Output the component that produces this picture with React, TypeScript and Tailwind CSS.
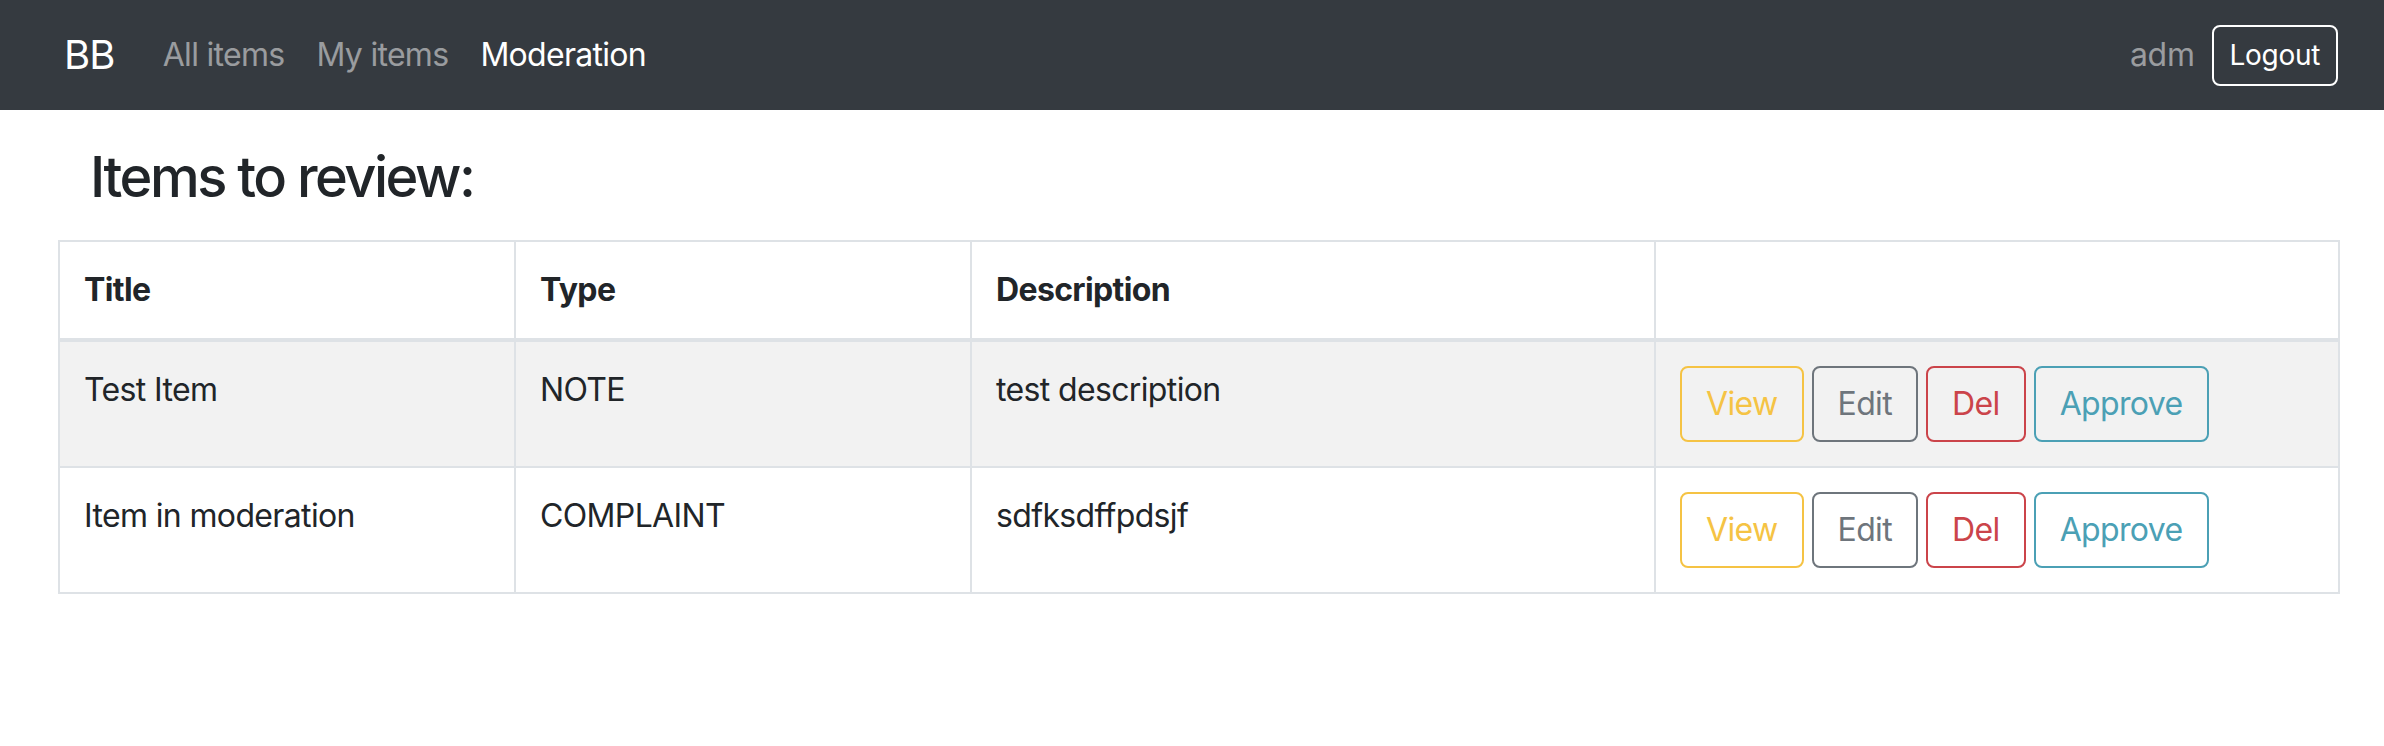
import React from "react";

interface ReviewItem {
  title: string;
  type: string;
  description: string;
}

const items: ReviewItem[] = [
  { title: "Test Item", type: "NOTE", description: "test description" },
  { title: "Item in moderation", type: "COMPLAINT", description: "sdfksdffpdsjf" },
];

const font = { fontFamily: "Inter, 'Noto Sans', sans-serif" };

const Navbar = () => (
  <nav className="h-[110px] bg-[#353a40] flex items-center pl-[64px] pr-[46px]">
    <span className="text-[40px] leading-[60px] text-white mr-[32px] tracking-[-0.02em]">BB</span>
    <a className="px-[16px] text-[32px] leading-[48px] text-white/50 tracking-[-0.022em]">All items</a>
    <a className="px-[16px] text-[32px] leading-[48px] text-white/50 tracking-[-0.022em]">My items</a>
    <a className="px-[16px] text-[32px] leading-[48px] text-white tracking-[-0.022em]">Moderation</a>
    <div className="ml-auto flex items-center tracking-[-0.02em]">
      <span className="text-[32px] leading-[48px] text-white/50 mr-[17px]">adm</span>
      <button className="h-[61px] px-[16px] border-2 border-white rounded-[8px] text-[28px] leading-[42px] text-white">
        Logout
      </button>
    </div>
  </nav>
);

const btnBase = "h-[76px] px-[24px] border-2 rounded-[8px] text-[32px] leading-[48px] bg-transparent";

const Actions = () => (
  <div className="flex gap-[8px]">
    <button className={`${btnBase} border-[#f5c344] text-[#f5c344]`}>View</button>
    <button className={`${btnBase} border-[#6e757c] text-[#6e757c]`}>Edit</button>
    <button className={`${btnBase} border-[#cb444a] text-[#cb444a]`}>Del</button>
    <button className={`${btnBase} border-[#4ba0b5] text-[#4ba0b5]`}>Approve</button>
  </div>
);

export default function App() {
  return (
    <div className="min-h-screen bg-white text-[#212529]" style={font}>
      <Navbar />
      <main className="pl-[58px] pr-[46px]">
        <h3 className="ml-[32px] mt-[34px] mb-[29px] text-[56px] leading-[67px] font-medium tracking-[-0.045em]">
          Items to review:
        </h3>
        <table className="table-fixed w-[2280px] border-collapse border-2 border-[#dee2e6] text-[32px] leading-[48px] tracking-[-0.02em]">
          <colgroup>
            <col className="w-[456px]" />
            <col className="w-[456px]" />
            <col className="w-[684px]" />
            <col className="w-[684px]" />
          </colgroup>
          <thead>
            <tr>
              <th className="p-[24px] text-left font-bold border-2 border-b-4 border-[#dee2e6]">Title</th>
              <th className="p-[24px] text-left font-bold border-2 border-b-4 border-[#dee2e6]">Type</th>
              <th className="p-[24px] text-left font-bold border-2 border-b-4 border-[#dee2e6]">Description</th>
              <th className="p-[24px] border-2 border-b-4 border-[#dee2e6]"></th>
            </tr>
          </thead>
          <tbody>
            {items.map((item, i) => (
              <tr key={item.title} className={i % 2 === 0 ? "bg-[#f2f2f2]" : ""}>
                <td className="p-[24px] align-top border-2 border-[#dee2e6]">{item.title}</td>
                <td className="p-[24px] align-top border-2 border-[#dee2e6]">{item.type}</td>
                <td className="p-[24px] align-top border-2 border-[#dee2e6]">{item.description}</td>
                <td className="p-[24px] align-top border-2 border-[#dee2e6]">
                  <Actions />
                </td>
              </tr>
            ))}
          </tbody>
        </table>
      </main>
    </div>
  );
}
